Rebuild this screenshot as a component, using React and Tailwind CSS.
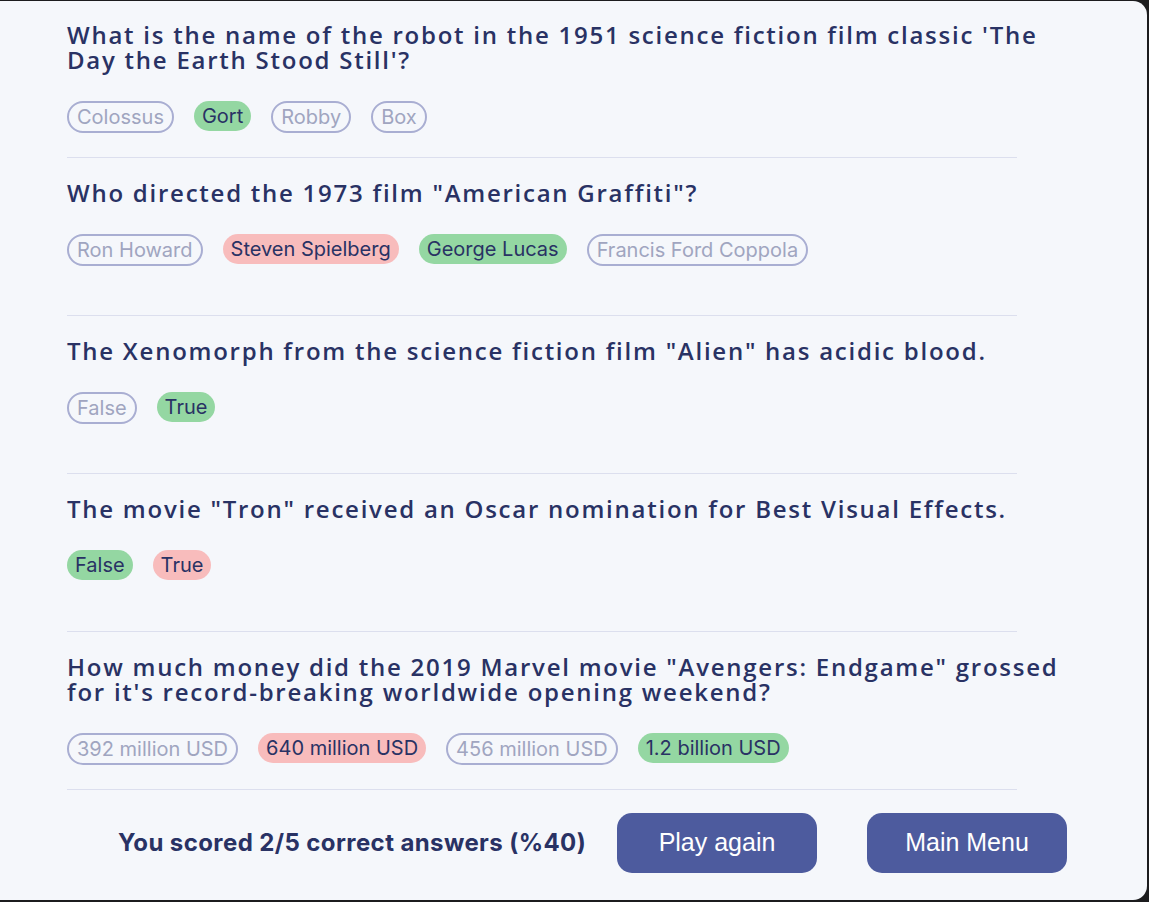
import { useState } from "react";

const questions = [
  {
    question: "What is the name of the robot in the 1951 science fiction film classic 'The Day the Earth Stood Still'?",
    answers: ["Colossus", "Gort", "Robby", "Box"],
    correct: "Gort",
    picked: "Gort",
  },
  {
    question: 'Who directed the 1973 film "American Graffiti"?',
    answers: ["Ron Howard", "Steven Spielberg", "George Lucas", "Francis Ford Coppola"],
    correct: "George Lucas",
    picked: "Steven Spielberg",
  },
  {
    question: 'The Xenomorph from the science fiction film "Alien" has acidic blood.',
    answers: ["False", "True"],
    correct: "True",
    picked: "True",
  },
  {
    question: 'The movie "Tron" received an Oscar nomination for Best Visual Effects.',
    answers: ["False", "True"],
    correct: "False",
    picked: "True",
  },
  {
    question: 'How much money did the 2019 Marvel movie "Avengers: Endgame" grossed for it\'s record-breaking worldwide opening weekend?',
    answers: ["392 million USD", "640 million USD", "456 million USD", "1.2 billion USD"],
    correct: "1.2 billion USD",
    picked: "640 million USD",
  },
];

const Pill = ({ text, correct, picked }) => {
  // correct answer is green, wrong pick is red, the rest fade out
  if (text === correct) {
    return (
      <span className="rounded-full bg-[#94d7a2] px-2 py-[3px] text-[20px] leading-[24px] text-[#293264]">
        {text}
      </span>
    );
  }
  if (text === picked) {
    return (
      <span className="rounded-full bg-[#f8bcbc] px-2 py-[3px] text-[20px] leading-[24px] text-[#293264]">
        {text}
      </span>
    );
  }
  return (
    <span className="rounded-full border-2 border-[#a9aed2] px-2 py-[2px] text-[20px] leading-[24px] text-[#a0a5c0]">
      {text}
    </span>
  );
};

const App = () => {
  const [items] = useState(questions);
  const score = items.filter((q) => q.picked === q.correct).length;

  return (
    <div className="h-[902px] bg-[#1c1c1e] pt-px pr-[2px] pb-[2px]">
      <div className="h-full overflow-hidden rounded-r-[14px] bg-[#f5f7fb] pl-[67px]">
        <div className="w-[1000px]">
          {items.map((q, i) => (
            <div key={q.question}>
              <div className={i === 0 ? "h-[156px] pt-[21px]" : "h-[157px] pt-[22px]"}>
                <h2
                  className="mb-[29px] text-[24px] font-semibold leading-[25px] tracking-[1.75px] text-[#293264]"
                  style={{ fontFamily: '"Open Sans", sans-serif' }}
                >
                  {q.question}
                </h2>
                <div
                  className="flex items-start gap-5"
                  style={{ fontFamily: "Inter, sans-serif" }}
                >
                  {q.answers.map((a) => (
                    <Pill key={a} text={a} correct={q.correct} picked={q.picked} />
                  ))}
                </div>
              </div>
              <div className="h-px w-[95%] bg-[#dcdfee]" />
            </div>
          ))}

          {/* FOOTER */}
          <div className="flex items-center pt-[23px]">
            <p
              className="ml-[51px] text-[24px] font-bold tracking-[0.4px] text-[#293264]"
              style={{ fontFamily: "Inter, sans-serif" }}
            >
              You scored {score}/{items.length} correct answers (%{(score / items.length) * 100})
            </p>
            <button
              className="ml-auto h-[60px] w-[200px] rounded-[15px] bg-[#4d5b9e] text-[25px] text-white"
              style={{ fontFamily: '"Liberation Sans", Arial, sans-serif' }}
            >
              Play again
            </button>
            <button
              className="ml-[50px] h-[60px] w-[200px] rounded-[15px] bg-[#4d5b9e] text-[25px] text-white"
              style={{ fontFamily: '"Liberation Sans", Arial, sans-serif' }}
            >
              Main Menu
            </button>
          </div>
        </div>
      </div>
    </div>
  );
};

export default App;
